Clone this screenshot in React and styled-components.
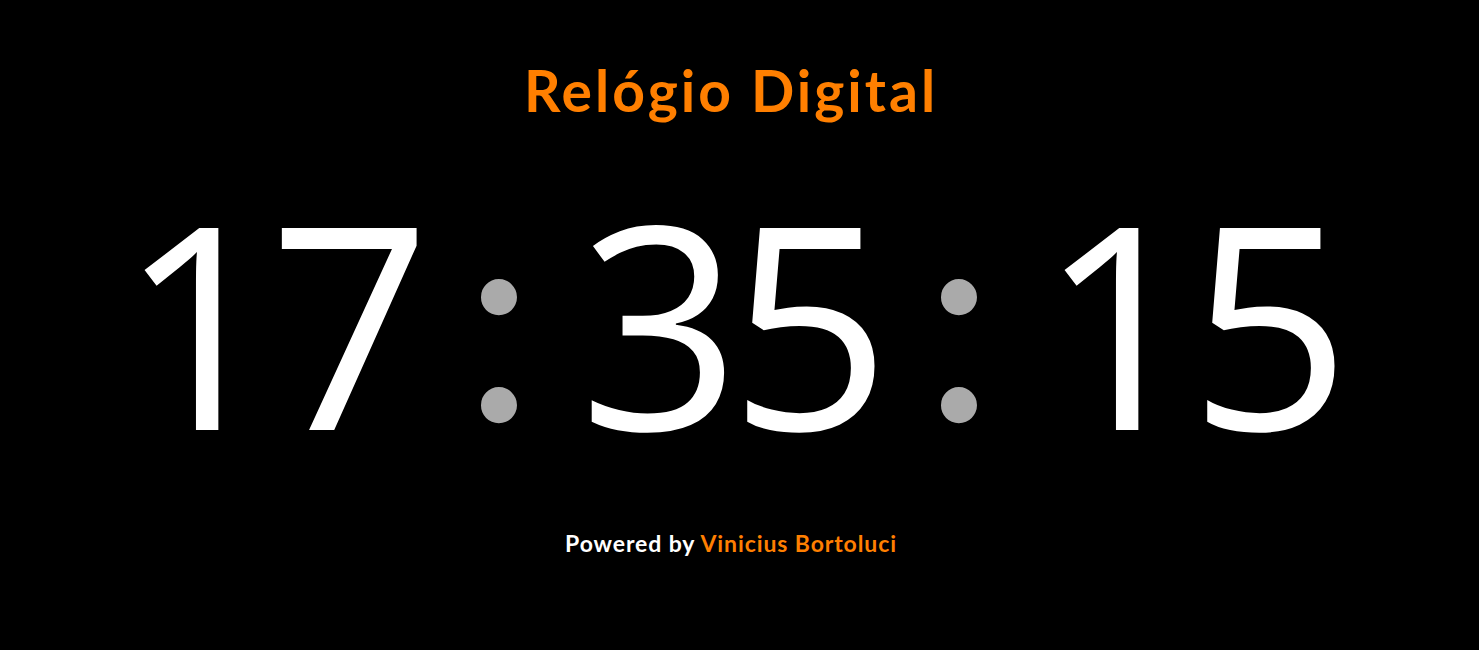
import styled, { createGlobalStyle } from 'styled-components'

const GlobalStyle = createGlobalStyle`
	html, body {
		margin: 0;
		padding: 0;
		background: #000;
	}
	body {
		font-family: Lato, 'Noto Sans', sans-serif;
	}
`

const Page = styled.div`
	width: 100%;
	height: 650px;
	box-sizing: border-box;
	padding-right: 17px;
	display: flex;
	flex-direction: column;
	align-items: center;
	background: #000;
`

const Title = styled.h1`
	margin: 56px 0 0;
	font-size: 57px;
	font-weight: 700;
	letter-spacing: 3px;
	color: #ff7f00;
	line-height: 1.2;
`

const Clock = styled.div`
	margin-top: 47px;
	margin-left: -4px;
	display: flex;
	align-items: flex-start;
	color: #fff;
`

const Group = styled.div`
	display: flex;
`

const Digit = styled.span`
	width: 150px;
	text-align: center;
	font-family: 'Open Sans', sans-serif;
	font-size: 283px;
	font-weight: 500;
	line-height: 300px;
`

const Colon = styled.span`
	width: 160px;
	text-align: center;
	font-size: 288px;
	line-height: 300px;
	color: #aaa;
	transform: translateY(-11px);
`

const Footer = styled.p`
	margin: 59px 0 0;
	font-size: 23px;
	font-weight: 700;
	letter-spacing: 0.9px;
	line-height: 1.2;
	color: #fff;
`

const Author = styled.span`
	color: #ff7f00;
`

function Pair({ value }) {
	return (
		<Group>
			{value.split('').map((d, i) => (
				<Digit key={i}>{d}</Digit>
			))}
		</Group>
	)
}

function App() {
	return (
		<>
			<GlobalStyle />
			<Page>
				<Title>Relógio Digital</Title>
				<Clock>
					<Pair value="17" />
					<Colon>:</Colon>
					<Pair value="35" />
					<Colon>:</Colon>
					<Pair value="15" />
				</Clock>
				<Footer>
					Powered by <Author>Vinicius Bortoluci</Author>
				</Footer>
			</Page>
		</>
	)
}

export default App
